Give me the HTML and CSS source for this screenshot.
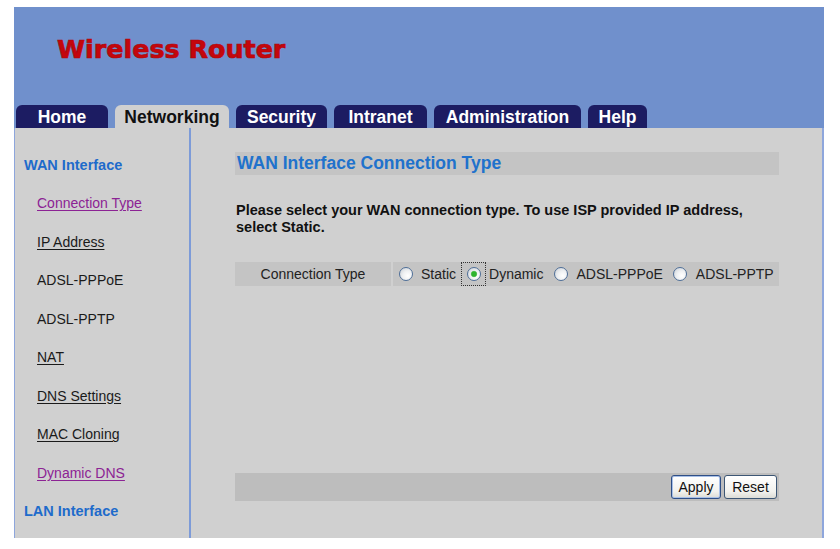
FILE: index.html
```html
<!DOCTYPE html>
<html lang="en">
<head>
<meta charset="utf-8">
<title>Wireless Router</title>
<link rel="stylesheet" href="styles.css">
</head>
<body>
<div class="page">
  <header class="header">
    <h1 class="brand">Wireless Router</h1>
    <nav class="tabs">
      <a class="tab tab-home" href="#">Home</a>
      <a class="tab tab-net active" href="#">Networking</a>
      <a class="tab tab-sec" href="#">Security</a>
      <a class="tab tab-intra" href="#">Intranet</a>
      <a class="tab tab-admin" href="#">Administration</a>
      <a class="tab tab-help" href="#">Help</a>
    </nav>
  </header>
  <div class="body">
    <aside class="sidebar">
      <div class="side-head">WAN Interface</div>
      <a class="side-link visited" href="#">Connection Type</a>
      <a class="side-link" href="#">IP Address</a>
      <span class="side-link plain">ADSL-PPPoE</span>
      <span class="side-link plain">ADSL-PPTP</span>
      <a class="side-link" href="#">NAT</a>
      <a class="side-link" href="#">DNS Settings</a>
      <a class="side-link" href="#">MAC Cloning</a>
      <a class="side-link visited" href="#">Dynamic DNS</a>
      <div class="side-head">LAN Interface</div>
    </aside>
    <main class="main">
      <h2 class="title-bar">WAN Interface Connection Type</h2>
      <p class="intro">Please select your WAN connection type. To use ISP provided IP address, select Static.</p>
      <div class="conn-row">
        <div class="conn-label">Connection Type</div>
        <div class="conn-options">
          <label class="opt"><span class="radio-box"><input type="radio" name="ct" class="radio"></span><span class="opt-text">Static</span></label>
          <label class="opt"><span class="radio-box focused"><input type="radio" name="ct" class="radio" checked></span><span class="opt-text">Dynamic</span></label>
          <label class="opt"><span class="radio-box"><input type="radio" name="ct" class="radio"></span><span class="opt-text">ADSL-PPPoE</span></label>
          <label class="opt"><span class="radio-box"><input type="radio" name="ct" class="radio"></span><span class="opt-text">ADSL-PPTP</span></label>
        </div>
      </div>
      <div class="action-bar">
        <button class="btn btn-default" type="button">Apply</button>
        <button class="btn" type="button">Reset</button>
      </div>
    </main>
  </div>
</div>
</body>
</html>
```
FILE: styles.css
```css
* { box-sizing: border-box; }
html, body { margin: 0; padding: 0; background: #ffffff; }
body { font-family: "Liberation Sans", Arial, sans-serif; color: #111; }

.page {
  width: 810px;
  margin: 7px 0 0 14px;
  background: #8ea6dc;
}

.header {
  height: 121px;
  background: #7090cc;
  display: flex;
  flex-direction: column;
}
.brand {
  margin: 0;
  padding: 27px 0 0 43px;
  font-family: "DejaVu Sans", "Liberation Sans", sans-serif;
  font-weight: bold;
  font-size: 25.4px;
  line-height: 30px;
  color: #c4060c;
  -webkit-text-stroke: 0.7px #b0050a;
}
.tabs {
  margin-top: auto;
  display: flex;
  gap: 7px;
  padding-left: 2px;
  height: 23px;
}
.tab {
  display: block;
  height: 23px;
  line-height: 24px;
  background: #1c1c62;
  color: #ffffff;
  font-weight: bold;
  font-size: 17.5px;
  text-decoration: none;
  text-align: center;
  border-radius: 6px 6px 0 0;
}
.tab.active { background: #d0d0d0; color: #111; }
.tab-home { width: 92px; }
.tab-net { width: 114px; }
.tab-sec { width: 91px; }
.tab-intra { width: 93px; }
.tab-admin { width: 147px; }
.tab-help { width: 59px; }

.body {
  display: flex;
  height: 410px;
  margin: 0 2px 0 1px;
  background: #d0d0d0;
}
.sidebar {
  flex: none;
  width: 176px;
  border-right: 2px solid #7d9bd8;
  padding-top: 17.75px;
  display: flex;
  flex-direction: column;
}
.side-head {
  height: 38.5px;
  line-height: 38.5px;
  padding-left: 9px;
  font-weight: bold;
  font-size: 14.5px;
  color: #1e6bcb;
}
.side-link {
  height: 38.5px;
  line-height: 38.5px;
  padding-left: 22px;
  font-size: 14px;
  color: #1a1a1a;
  text-decoration: underline;
  text-underline-offset: 2px;
}
.side-link.visited { color: #8c2394; }
.side-link.plain { text-decoration: none; }

.main {
  flex: 1;
  padding: 24px 43px 0 44px;
  display: flex;
  flex-direction: column;
}
.title-bar {
  margin: 0;
  height: 23px;
  line-height: 23px;
  padding-left: 2px;
  background: #c4c4c4;
  color: #2072cc;
  font-size: 17.5px;
  font-weight: bold;
}
.intro {
  margin: 26.5px 0 0 1px;
  font-size: 14.5px;
  font-weight: bold;
  line-height: 17px;
  color: #111;
}
.conn-row {
  margin-top: 26.5px;
  display: flex;
  gap: 2px;
  height: 24px;
}
.conn-label {
  width: 156px;
  background: #c4c4c4;
  text-align: center;
  font-size: 14px;
  line-height: 24px;
  color: #222;
}
.conn-options {
  flex: 1;
  background: #c4c4c4;
  display: flex;
  align-items: center;
  gap: 5px;
  font-size: 14px;
  color: #222;
}
.opt {
  display: flex;
  align-items: center;
  gap: 3px;
}
.radio-box {
  width: 25px;
  height: 24px;
  display: flex;
  align-items: center;
  justify-content: center;
}
.radio-box.focused { border: 1px dotted #333; }
.radio {
  -webkit-appearance: none;
  appearance: none;
  margin: 0;
  width: 14px;
  height: 14px;
  border-radius: 50%;
  border: 1px solid #4f6f98;
  background: radial-gradient(circle at 65% 65%, #ffffff 0%, #eef0f2 45%, #c6cbd2 100%);
}
.radio:checked {
  background:
    radial-gradient(circle at 50% 50%, #2eb42e 0 2.3px, #7fcf7f 3px, transparent 3.6px),
    radial-gradient(circle at 65% 65%, #ffffff 0%, #eef0f2 45%, #c6cbd2 100%);
}
.opt-text { line-height: 24px; }

.action-bar {
  margin-top: 187px;
  height: 28px;
  background: #bdbdbd;
  display: flex;
  align-items: center;
  justify-content: flex-end;
  gap: 3px;
  padding-right: 2px;
}
.btn {
  height: 24px;
  padding: 0 6px;
  font-family: "Liberation Sans", Arial, sans-serif;
  font-size: 14px;
  color: #111;
  background: linear-gradient(#ffffff, #f2f2ee 70%, #dcdcd6);
  border: 1px solid #3c5674;
  border-radius: 3px;
}
.btn-default {
  width: 50px;
  border-color: #2f4f86;
  box-shadow: inset 0 0 0 1px #a8c0e8;
}
.btn:not(.btn-default) { width: 53px; }
```
